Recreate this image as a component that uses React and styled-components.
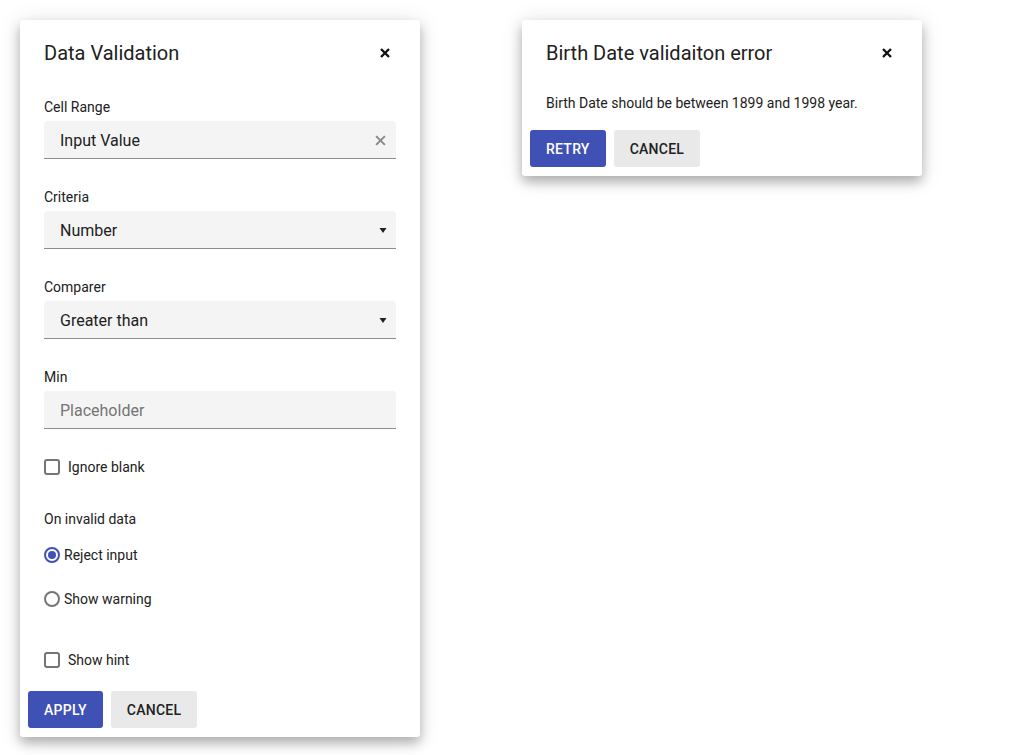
import React from "react";
import styled, { createGlobalStyle } from "styled-components";

const GlobalStyle = createGlobalStyle`
  body {
    margin: 0;
    background: #fff;
    font-family: Roboto, "Liberation Sans", sans-serif;
    color: #212121;
  }
`;

const CloseIcon = ({ size = 10, color = "#111", weight = 2.4 }) => (
  <svg width={size} height={size} viewBox="0 0 10 10">
    <path d="M1 1L9 9M9 1L1 9" stroke={color} strokeWidth={weight} strokeLinecap="butt" />
  </svg>
);

const ArrowIcon = () => (
  <svg width="8" height="5" viewBox="0 0 8 5" style={{ marginRight: -1 }}>
    <path d="M0.5 0H7.5L4 5Z" fill="#212121" />
  </svg>
);

const App = () => {
  return (
    <>
      <GlobalStyle />
      <Page>
        <Dialog>
          <Header>
            <Title>Data Validation</Title>
            <CloseButton>
              <CloseIcon />
            </CloseButton>
          </Header>
          <Body>
            <Field>
              <Label>Cell Range</Label>
              <InputBox>
                <Value>Input Value</Value>
                <CloseIcon size={11} color="#8a8a8a" weight={1.8} />
              </InputBox>
            </Field>
            <Field>
              <Label>Criteria</Label>
              <InputBox>
                <Value>Number</Value>
                <ArrowIcon />
              </InputBox>
            </Field>
            <Field>
              <Label>Comparer</Label>
              <InputBox>
                <Value>Greater than</Value>
                <ArrowIcon />
              </InputBox>
            </Field>
            <Field>
              <Label>Min</Label>
              <InputBox>
                <Value $placeholder>Placeholder</Value>
              </InputBox>
            </Field>
            <OptionRow $top={26}>
              <Checkbox />
              <OptionText $gap={8}>Ignore blank</OptionText>
            </OptionRow>
            <SectionLabel>On invalid data</SectionLabel>
            <OptionRow $top={14}>
              <Radio $checked />
              <OptionText>Reject input</OptionText>
            </OptionRow>
            <OptionRow $top={20}>
              <Radio />
              <OptionText>Show warning</OptionText>
            </OptionRow>
            <OptionRow $top={37}>
              <Checkbox />
              <OptionText $gap={8}>Show hint</OptionText>
            </OptionRow>
          </Body>
          <Footer $top={19}>
            <Button $primary>Apply</Button>
            <Button>Cancel</Button>
          </Footer>
        </Dialog>

        <Dialog>
          <Header>
            <Title>Birth Date validaiton error</Title>
            <CloseButton>
              <CloseIcon />
            </CloseButton>
          </Header>
          <Message>Birth Date should be between 1899 and 1998 year.</Message>
          <Footer $top={17}>
            <Button $primary>Retry</Button>
            <Button>Cancel</Button>
          </Footer>
        </Dialog>
      </Page>
    </>
  );
};

const Page = styled.div`
  display: flex;
  align-items: flex-start;
  gap: 102px;
  padding: 20px;
`;

const Dialog = styled.div`
  width: 400px;
  background: #fff;
  border-radius: 3px;
  box-shadow: 0 6px 12px rgba(0, 0, 0, 0.28), 0 2px 24px rgba(0, 0, 0, 0.1);
  padding-bottom: 9px;
`;

const Header = styled.div`
  display: flex;
  align-items: center;
  justify-content: space-between;
  padding: 21px 24px 0;
  height: 24px;
  box-sizing: content-box;
`;

const Title = styled.h2`
  margin: 0;
  font-size: 20px;
  font-weight: 400;
  line-height: 24px;
  color: #212121;
`;

const CloseButton = styled.span`
  display: flex;
  align-items: center;
  margin-right: 6px;
`;

const Body = styled.div`
  display: flex;
  flex-direction: column;
  padding: 32px 24px 0;
`;

const Field = styled.div`
  display: flex;
  flex-direction: column;
  & + & {
    margin-top: 28px;
  }
`;

const Label = styled.div`
  font-size: 14px;
  line-height: 20px;
  color: #212121;
  margin-bottom: 4px;
`;

const InputBox = styled.div`
  display: flex;
  align-items: center;
  justify-content: space-between;
  height: 37px;
  padding: 1px 10px 0 16px;
  box-sizing: border-box;
  height: 38px;
  background: #f4f4f4;
  border-radius: 4px 4px 0 0;
  border-bottom: 1px solid #8c8c8c;
`;

const Value = styled.span`
  font-size: 16px;
  color: ${(p) => (p.$placeholder ? "#757575" : "#212121")};
`;

const OptionRow = styled.div`
  display: flex;
  align-items: center;
  height: 24px;
  margin-top: ${(p) => p.$top}px;
`;

const OptionText = styled.span`
  font-size: 14px;
  color: #212121;
  margin-left: ${(p) => p.$gap || 4}px;
`;

const Checkbox = styled.span`
  width: 16px;
  height: 16px;
  box-sizing: border-box;
  border: 2px solid #757575;
  border-radius: 3px;
`;

const Radio = styled.span`
  width: 16px;
  height: 16px;
  box-sizing: border-box;
  border: 2px solid ${(p) => (p.$checked ? "#3f51b5" : "#757575")};
  border-radius: 50%;
  display: flex;
  align-items: center;
  justify-content: center;
  &::after {
    content: "";
    width: 8px;
    height: 8px;
    border-radius: 50%;
    background: ${(p) => (p.$checked ? "#3f51b5" : "transparent")};
  }
`;

const SectionLabel = styled.div`
  font-size: 14px;
  line-height: 20px;
  margin-top: 30px;
  color: #212121;
`;

const Message = styled.p`
  margin: 28px 24px 0;
  font-size: 14px;
  line-height: 20px;
  color: #212121;
`;

const Footer = styled.div`
  display: flex;
  gap: 8px;
  padding: 0 8px;
  margin-top: ${(p) => p.$top}px;
`;

const Button = styled.button`
  height: 37px;
  padding: 0 16px;
  border: none;
  border-radius: 3px;
  font-family: Roboto, "Liberation Sans", sans-serif;
  font-size: 14px;
  font-weight: 500;
  text-transform: uppercase;
  letter-spacing: 0.25px;
  background: ${(p) => (p.$primary ? "#3f51b5" : "#e9e9e9")};
  color: ${(p) => (p.$primary ? "#fff" : "#212121")};
`;

export default App;
